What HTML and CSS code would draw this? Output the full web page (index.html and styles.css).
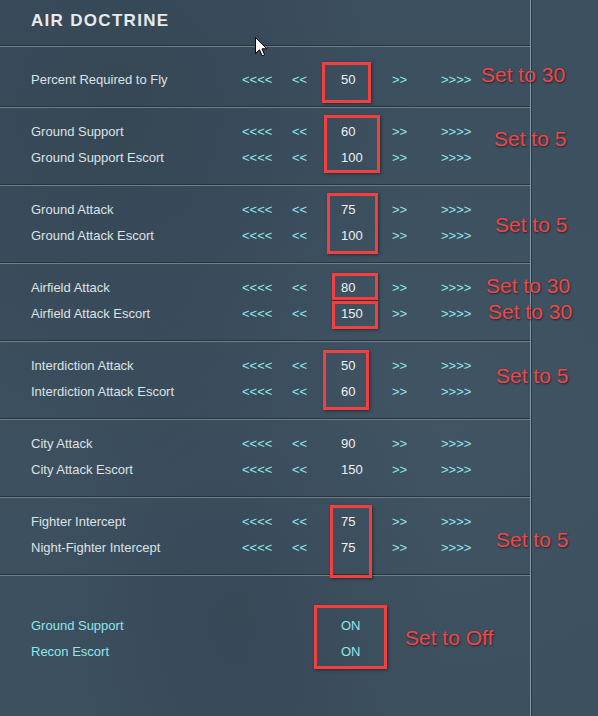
FILE: index.html
```html
<!DOCTYPE html>
<html>
<head>
    <meta charset="UTF-8">
    <title>Air Doctrine</title>
    <link rel="stylesheet" href="styles.css">
</head>
<body>
<div class="screen">
    <div class="panel">
        <div class="panel-head">
            <h1>AIR DOCTRINE</h1>
        </div>

        <div class="group group-first">
            <div class="row"><span class="label">Percent Required to Fly</span><span class="step">&lt;&lt;&lt;&lt;</span><span class="step">&lt;&lt;</span><span class="value">50</span><span class="step">&gt;&gt;</span><span class="step">&gt;&gt;&gt;&gt;</span></div>
        </div>

        <div class="group">
            <div class="row"><span class="label">Ground Support</span><span class="step">&lt;&lt;&lt;&lt;</span><span class="step">&lt;&lt;</span><span class="value">60</span><span class="step">&gt;&gt;</span><span class="step">&gt;&gt;&gt;&gt;</span></div>
            <div class="row"><span class="label">Ground Support Escort</span><span class="step">&lt;&lt;&lt;&lt;</span><span class="step">&lt;&lt;</span><span class="value">100</span><span class="step">&gt;&gt;</span><span class="step">&gt;&gt;&gt;&gt;</span></div>
        </div>

        <div class="group">
            <div class="row"><span class="label">Ground Attack</span><span class="step">&lt;&lt;&lt;&lt;</span><span class="step">&lt;&lt;</span><span class="value">75</span><span class="step">&gt;&gt;</span><span class="step">&gt;&gt;&gt;&gt;</span></div>
            <div class="row"><span class="label">Ground Attack Escort</span><span class="step">&lt;&lt;&lt;&lt;</span><span class="step">&lt;&lt;</span><span class="value">100</span><span class="step">&gt;&gt;</span><span class="step">&gt;&gt;&gt;&gt;</span></div>
        </div>

        <div class="group">
            <div class="row"><span class="label">Airfield Attack</span><span class="step">&lt;&lt;&lt;&lt;</span><span class="step">&lt;&lt;</span><span class="value">80</span><span class="step">&gt;&gt;</span><span class="step">&gt;&gt;&gt;&gt;</span></div>
            <div class="row"><span class="label">Airfield Attack Escort</span><span class="step">&lt;&lt;&lt;&lt;</span><span class="step">&lt;&lt;</span><span class="value">150</span><span class="step">&gt;&gt;</span><span class="step">&gt;&gt;&gt;&gt;</span></div>
        </div>

        <div class="group">
            <div class="row"><span class="label">Interdiction Attack</span><span class="step">&lt;&lt;&lt;&lt;</span><span class="step">&lt;&lt;</span><span class="value">50</span><span class="step">&gt;&gt;</span><span class="step">&gt;&gt;&gt;&gt;</span></div>
            <div class="row"><span class="label">Interdiction Attack Escort</span><span class="step">&lt;&lt;&lt;&lt;</span><span class="step">&lt;&lt;</span><span class="value">60</span><span class="step">&gt;&gt;</span><span class="step">&gt;&gt;&gt;&gt;</span></div>
        </div>

        <div class="group">
            <div class="row"><span class="label">City Attack</span><span class="step">&lt;&lt;&lt;&lt;</span><span class="step">&lt;&lt;</span><span class="value">90</span><span class="step">&gt;&gt;</span><span class="step">&gt;&gt;&gt;&gt;</span></div>
            <div class="row"><span class="label">City Attack Escort</span><span class="step">&lt;&lt;&lt;&lt;</span><span class="step">&lt;&lt;</span><span class="value">150</span><span class="step">&gt;&gt;</span><span class="step">&gt;&gt;&gt;&gt;</span></div>
        </div>

        <div class="group">
            <div class="row"><span class="label">Fighter Intercept</span><span class="step">&lt;&lt;&lt;&lt;</span><span class="step">&lt;&lt;</span><span class="value">75</span><span class="step">&gt;&gt;</span><span class="step">&gt;&gt;&gt;&gt;</span></div>
            <div class="row"><span class="label">Night-Fighter Intercept</span><span class="step">&lt;&lt;&lt;&lt;</span><span class="step">&lt;&lt;</span><span class="value">75</span><span class="step">&gt;&gt;</span><span class="step">&gt;&gt;&gt;&gt;</span></div>
        </div>

        <div class="group group-toggles">
            <div class="row"><span class="label label-cyan">Ground Support</span><span class="value value-cyan">ON</span></div>
            <div class="row"><span class="label label-cyan">Recon Escort</span><span class="value value-cyan">ON</span></div>
        </div>
    </div>
    <div class="side"></div>
</div>

<!-- red annotations drawn over the screenshot -->
<div class="notes">
    <div class="mark mark-1"></div>
    <div class="mark mark-2"></div>
    <div class="mark mark-3"></div>
    <div class="mark mark-4a"></div>
    <div class="mark mark-4b"></div>
    <div class="mark mark-5"></div>
    <div class="mark mark-6"></div>
    <div class="mark mark-7"></div>

    <span class="note note-1">Set to 30</span>
    <span class="note note-2">Set to 5</span>
    <span class="note note-3">Set to 5</span>
    <span class="note note-4a">Set to 30</span>
    <span class="note note-4b">Set to 30</span>
    <span class="note note-5">Set to 5</span>
    <span class="note note-6">Set to 5</span>
    <span class="note note-7">Set to Off</span>
</div>

<svg class="cursor" width="13" height="20" viewBox="0 0 13 20">
    <path d="M0.5 0.5 L0.5 16.5 L4.5 12.8 L7.2 18.8 L9.6 17.8 L7 11.8 L11.8 11.8 Z" fill="#fff" stroke="#000" stroke-width="1" stroke-linejoin="miter"/>
</svg>
</body>
</html>
```

FILE: styles.css
```css
body {
    margin: 0;
    width: 598px;
    height: 716px;
    overflow: hidden;
    position: relative;
    font-family: "Liberation Sans", Arial, sans-serif;
    background-color: #3d5060;
    background-image:
        radial-gradient(ellipse at 20% 15%, rgba(30,42,52,0.25), transparent 45%),
        radial-gradient(ellipse at 75% 60%, rgba(80,100,115,0.18), transparent 50%),
        radial-gradient(ellipse at 40% 85%, rgba(30,42,52,0.2), transparent 40%);
}
.screen {
    display: flex;
    height: 716px;
}
.panel {
    width: 530px;
    border-right: 1px solid #8796a1;
    box-shadow: 1px 0 0 #2a3842;
}
.side {
    flex: 1;
}
.panel-head {
    height: 34px;
    padding: 11px 0 0 31px;
    border-bottom: 1px solid #26333d;
    box-shadow: 0 1px 0 #6f808c;
}
.panel-head h1 {
    margin: 0;
    font-size: 17px;
    line-height: 20px;
    font-weight: bold;
    letter-spacing: 1.3px;
    color: #e8eaeb;
}
.group {
    padding: 12px 0 13px 31px;
    border-bottom: 1px solid #26333d;
    box-shadow: 0 1px 0 #6f808c;
}
.group-first {
    padding-top: 21px;
    padding-bottom: 13px;
}
.group-toggles {
    padding-top: 38px;
    border-bottom: none;
    box-shadow: none;
}
.row {
    display: grid;
    grid-template-columns: 211px 50px 49px 51px 49px auto;
    height: 26px;
    line-height: 26px;
    font-size: 13px;
    color: #dde2e5;
}
.step {
    color: #8fe6ec;
}
.value {
    grid-column: 4;
    color: #eef1f2;
}
.label-cyan,
.value-cyan {
    color: #8fe6ec;
}

.notes {
    position: absolute;
    left: 0;
    top: 0;
    width: 598px;
    height: 716px;
    pointer-events: none;
}
.mark {
    position: absolute;
    box-sizing: border-box;
    border: 3px solid #f23f3f;
    box-shadow: 1px 1px 3px rgba(0,0,0,0.45);
}
.mark-1 { left: 322px; top: 62px; width: 49px; height: 41px; }
.mark-2 { left: 324px; top: 115px; width: 56px; height: 58px; }
.mark-3 { left: 327px; top: 193px; width: 51px; height: 61px; }
.mark-4a { left: 332px; top: 273px; width: 46px; height: 27px; }
.mark-4b { left: 332px; top: 301px; width: 46px; height: 28px; }
.mark-5 { left: 323px; top: 350px; width: 46px; height: 60px; }
.mark-6 { left: 330px; top: 505px; width: 42px; height: 73px; }
.mark-7 { left: 314px; top: 605px; width: 73px; height: 64px; }

.note {
    position: absolute;
    font-size: 21px;
    line-height: 24px;
    color: #f24646;
    white-space: nowrap;
    text-shadow: 1px 1px 2px rgba(0,0,0,0.55);
}
.note-1 { left: 481px; top: 63px; }
.note-2 { left: 494px; top: 127px; }
.note-3 { left: 495px; top: 213px; }
.note-4a { left: 486px; top: 274px; }
.note-4b { left: 488px; top: 300px; }
.note-5 { left: 496px; top: 364px; }
.note-6 { left: 496px; top: 528px; }
.note-7 { left: 405px; top: 626px; }

.cursor {
    position: absolute;
    left: 255px;
    top: 37px;
}
```
